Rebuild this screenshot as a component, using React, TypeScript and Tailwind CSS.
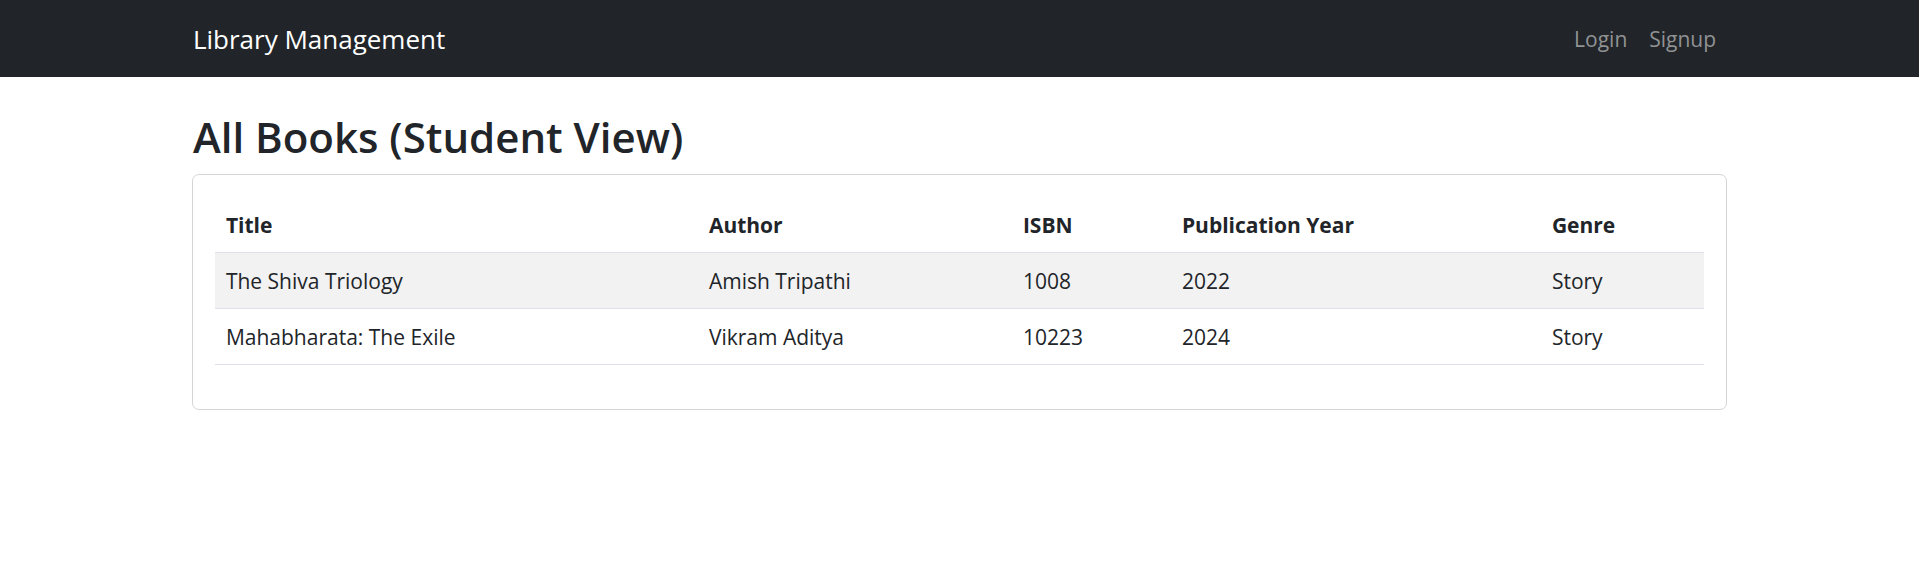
import React from "react";

type Book = {
  title: string;
  author: string;
  isbn: string;
  year: number;
  genre: string;
};

const books: Book[] = [
  { title: "The Shiva Triology", author: "Amish Tripathi", isbn: "1008", year: 2022, genre: "Story" },
  { title: "Mahabharata: The Exile", author: "Vikram Aditya", isbn: "10223", year: 2024, genre: "Story" },
];

export default function App() {
  return (
    <div className="min-h-screen bg-white text-[#212529] font-['Open_Sans',sans-serif]">
      {/* navbar */}
      <nav className="h-[77px] bg-[#212529]">
        <div className="mx-auto flex h-full w-[80%] items-center justify-between pt-[2px]">
          <a className="pl-px text-[26px] text-white">Library Management</a>
          <div className="flex text-[21px] text-[#909294]">
            <a className="px-[11px]">Login</a>
            <a className="px-[11px]">Signup</a>
          </div>
        </div>
      </nav>

      <div className="mx-auto mt-[33px] w-[80%]">
        <h2 className="mb-[11px] pl-px text-[42px] font-semibold leading-[53px]">
          All Books (Student View)
        </h2>

        <div className="rounded-[7px] border border-[#d3d5d7] p-[22px]">
          <table className="mb-[22px] w-full border-collapse text-left text-[21px] leading-[33px]">
            <thead>
              <tr className="border-b border-[#dee2e6]">
                <th className="w-[483px] px-[11px] pt-[12px] pb-[10px] font-bold">Title</th>
                <th className="w-[314px] px-[11px] pt-[12px] pb-[10px] font-bold">Author</th>
                <th className="w-[159px] px-[11px] pt-[12px] pb-[10px] font-bold">ISBN</th>
                <th className="w-[370px] px-[11px] pt-[12px] pb-[10px] font-bold">Publication Year</th>
                <th className="px-[11px] pt-[12px] pb-[10px] font-bold">Genre</th>
              </tr>
            </thead>
            <tbody>
              {books.map((b, i) => (
                <tr
                  key={b.isbn}
                  className={`border-b border-[#dee2e6] ${i % 2 === 0 ? "bg-[#f2f2f2]" : "bg-white"}`}
                >
                  <td className="px-[11px] pt-[12px] pb-[10px]">{b.title}</td>
                  <td className="px-[11px] pt-[12px] pb-[10px]">{b.author}</td>
                  <td className="px-[11px] pt-[12px] pb-[10px]">{b.isbn}</td>
                  <td className="px-[11px] pt-[12px] pb-[10px]">{b.year}</td>
                  <td className="px-[11px] pt-[12px] pb-[10px]">{b.genre}</td>
                </tr>
              ))}
            </tbody>
          </table>
        </div>
      </div>
    </div>
  );
}
